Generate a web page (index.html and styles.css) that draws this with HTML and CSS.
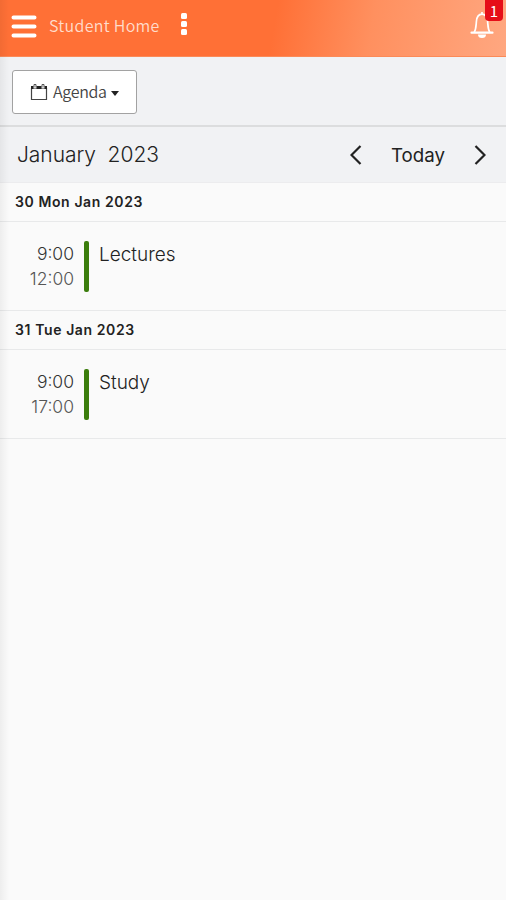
FILE: index.html
```html
<!DOCTYPE html>
<html lang="en">
<head>
<meta charset="utf-8">
<title>Student Home</title>
<link rel="stylesheet" href="styles.css">
</head>
<body>
<div class="page">
	<div class="header">
		<svg class="menu" width="26" height="24" viewBox="0 0 26 24"><path d="M2.500 2.500h21M2.500 11.500h21M2.500 20.500h21" stroke="#fff" stroke-width="4" stroke-linecap="round"/></svg>
		<span class="title">Student Home</span>
		<svg class="dots" width="6" height="22" viewBox="0 0 6 22" fill="#fff"><rect width="6" height="6" rx="1.5"/><rect y="8" width="6" height="6" rx="1.5"/><rect y="16" width="6" height="6" rx="1.5"/></svg>
		<div class="bell">
			<svg width="26" height="29" viewBox="0 0 26 29" fill="none"><path d="M13 2v2M5.2 22.400C7.200 19 7 15.500 7.400 11.500 7.800 6.800 10 4.200 13 4.200s5.200 2.600 5.600 7.300c.4 4 .2 7.500 2.200 10.900" stroke="#fff" stroke-width="1.700"/><path d="M2.500 22.700h21" stroke="#fff" stroke-width="2.200" stroke-linecap="round"/><path d="M9 24.500h8a4 3.600 0 0 1-8 0z" fill="#fff"/></svg>
			<span class="badge">1</span>
		</div>
	</div>
	<div class="toolbar">
		<button class="view" type="button">
			<svg width="18" height="18" viewBox="0 0 18 18"><path d="M1.500 5v11.500h15V5" fill="none" stroke="#444" stroke-width="1.200"/><path d="M1 3h2.500v2.500h3V3h5v2.500h3V3H17v3H1z" fill="#222"/><path d="M4 4.500v-3h2v3M12 4.500v-3h2v3" fill="none" stroke="#444" stroke-width=".9"/></svg>
			<span>Agenda</span>
			<i class="caret"></i>
		</button>
	</div>
	<div class="month">
		<h1>January&nbsp; 2023</h1>
		<svg class="prev" width="12" height="20" viewBox="0 0 12 20"><path d="M10.500 1L1.500 10l9 9"/></svg>
		<span class="today">Today</span>
		<svg class="next" width="12" height="20" viewBox="0 0 12 20"><path d="M1.500 1l9 9-9 9"/></svg>
	</div>
	<div class="day">30 Mon Jan 2023</div>
	<div class="event">
		<div class="time">9:00<br><span>12:00</span></div>
		<div class="bar"></div>
		<div class="name">Lectures</div>
	</div>
	<div class="day">31 Tue Jan 2023</div>
	<div class="event">
		<div class="time">9:00<br><span>17:00</span></div>
		<div class="bar"></div>
		<div class="name">Study</div>
	</div>
</div>
</body>
</html>
```
FILE: styles.css
```css
*{margin:0;padding:0;box-sizing:border-box;}
body{font-family:Inter, "Liberation Sans", sans-serif;color:#222;background:#fafafa;}
.page{min-height:900px;position:relative;}
/* soft shade down the left edge */
.page:after{content:"";position:absolute;left:0;top:0;bottom:0;width:9px;background:linear-gradient(90deg,rgba(0,0,0,.05),rgba(0,0,0,0));}
.header{display:flex;align-items:flex-start;height:57px;background:linear-gradient(100deg,#ff7036 0%,#ff7036 54%,#ff905f 73%,#ffa780 100%);border-bottom:1px solid #fb8a58;}
.menu{margin:15px 0 0 11px;}
.title{margin:13px 0 0 12px;width:123px;font:350 16px/25px "Noto Sans CJK SC", "Noto Sans", sans-serif;letter-spacing:.3px;color:#ffdccb;white-space:nowrap;}
.dots{margin:13px 0 0 9px;}
.bell{position:relative;margin:10px 11px 0 auto;height:29px;}
.badge{position:absolute;top:-10px;right:-8px;width:18px;height:21px;border-radius:0 0 4px 4px;background:#e60d18;color:#fff;font:15px/21px "Noto Sans CJK SC", "Noto Sans", sans-serif;text-align:center;}
.toolbar{height:70px;padding:13px 12px;background:#f1f2f4;border-bottom:2px solid #dcddde;}
.view{display:flex;align-items:center;width:125px;height:44px;padding-left:17px;border:1px solid #a2a2a2;border-radius:3px;background:#fff;color:#444;font:350 16px/24px "Noto Sans CJK SC", "Noto Sans", sans-serif;}
.view span{margin:-2px 0 0 5px;width:55px;text-align:left;letter-spacing:-.3px;}
.caret{margin:3px 0 0 3px;border:4.500px solid transparent;border-top:5px solid #222;border-bottom:0;}
.month{display:flex;align-items:center;height:56px;padding:0 20px 0 17px;background:#f1f2f4;border-bottom:1px solid #ececee;}
.month h1{margin-right:auto;font-size:21px;font-weight:300;letter-spacing:-.05px;color:#222;}
.month svg{fill:none;stroke:#222;stroke-width:2.200;}
.prev{margin-right:1px;}
.today{margin:2px 29px 0 28px;font-size:18.700px;}
.day{height:39px;padding-left:15px;border-bottom:1px solid #e8e9ea;font-size:14px;font-weight:600;line-height:38px;letter-spacing:.6px;}
.event{display:flex;height:89px;padding-top:19px;border-bottom:1px solid #e8e9ea;}
.time{width:74px;text-align:right;font-size:17.500px;font-weight:300;line-height:25px;color:#333;}
.time span{color:#555;}
.bar{width:5px;height:51px;margin:0 10px;border-radius:2px;background:#3b7d0c;}
.name{font-size:19px;font-weight:300;line-height:27px;}
```
